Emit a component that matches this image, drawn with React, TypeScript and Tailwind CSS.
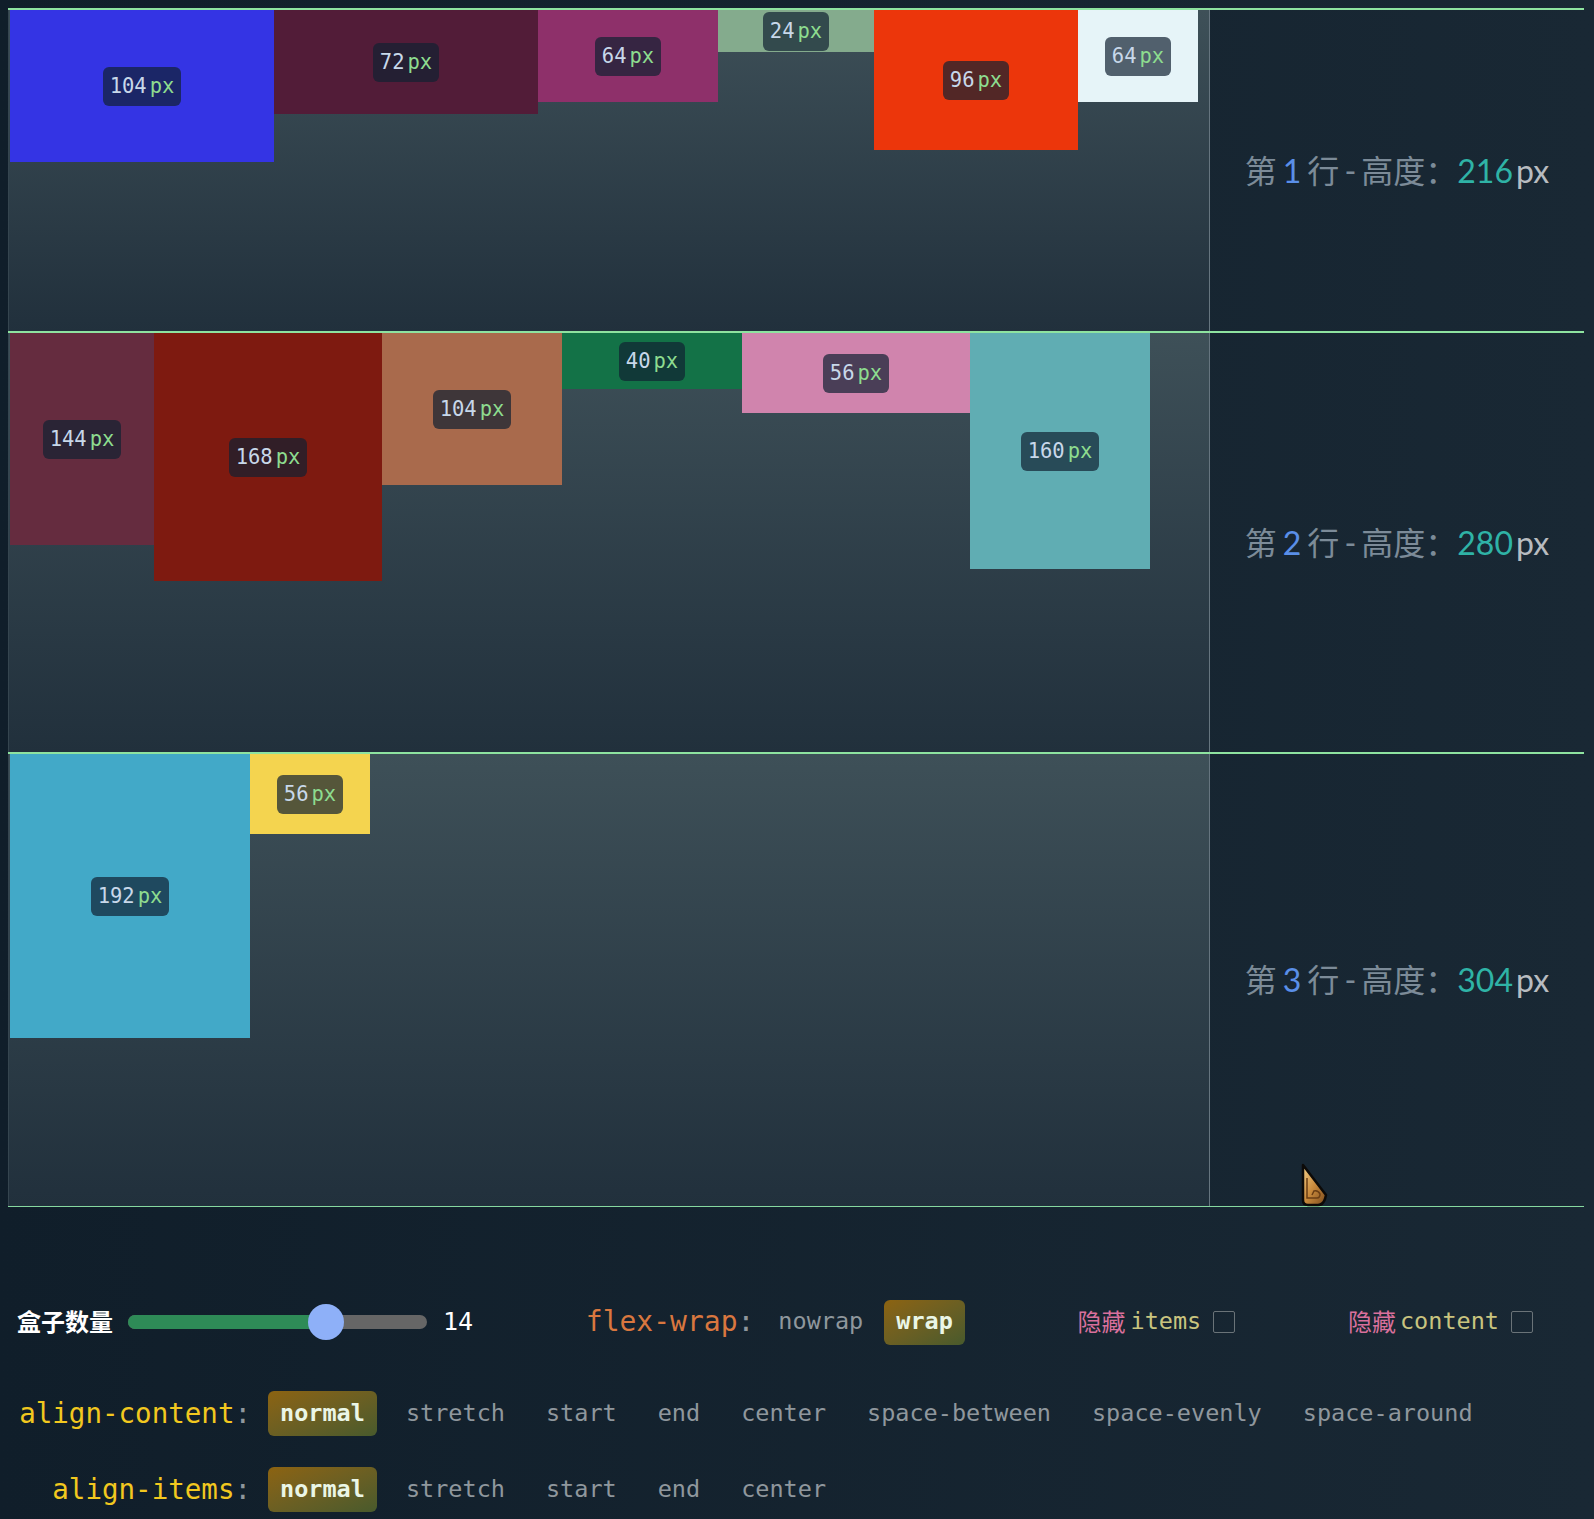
import React from "react";

type Box = { v: number; cls: string };
type Row = { n: number; h: number; cls: string; boxes: Box[] };

const rows: Row[] = [
  {
    n: 1,
    h: 216,
    cls: "h-[323px]",
    boxes: [
      { v: 104, cls: "w-[264px] h-[152px] bg-[#3434e4]" },
      { v: 72, cls: "w-[264px] h-[104px] bg-[#521c38]" },
      { v: 64, cls: "w-[180px] h-[92px] bg-[#8e306a]" },
      { v: 24, cls: "w-[156px] h-[42px] bg-[#84ab8d]" },
      { v: 96, cls: "w-[204px] h-[140px] bg-[#ec360b]" },
      { v: 64, cls: "w-[120px] h-[92px] bg-[#e6f4f8]" },
    ],
  },
  {
    n: 2,
    h: 280,
    cls: "h-[421px]",
    boxes: [
      { v: 144, cls: "w-[144px] h-[212px] bg-[#652c3f]" },
      { v: 168, cls: "w-[228px] h-[248px] bg-[#7e1a10]" },
      { v: 104, cls: "w-[180px] h-[152px] bg-[#a96a4c]" },
      { v: 40, cls: "w-[180px] h-[56px] bg-[#137247]" },
      { v: 56, cls: "w-[228px] h-[80px] bg-[#d084ad]" },
      { v: 160, cls: "w-[180px] h-[236px] bg-[#60adb3]" },
    ],
  },
  {
    n: 3,
    h: 304,
    cls: "h-[454px]",
    boxes: [
      { v: 192, cls: "w-[240px] h-[284px] bg-[#42a9c8]" },
      { v: 56, cls: "w-[120px] h-[80px] bg-[#f4d44f]" },
    ],
  },
];

const alignContent = [
  "normal",
  "stretch",
  "start",
  "end",
  "center",
  "space-between",
  "space-evenly",
  "space-around",
];
const alignItems = ["normal", "stretch", "start", "end", "center"];

const mono = "font-['DejaVu_Sans_Mono',monospace]";
const cjk = "font-['Lato','Noto_Sans_CJK_SC',sans-serif]";

const Option = ({ label, active }: { label: string; active?: boolean }) => (
  <span
    className={
      active
        ? "h-[45px] flex items-center px-[12px] rounded-md bg-linear-to-br from-[#8c6310] to-[#485a2c] text-[#eaf6e6] font-bold text-[23.5px]"
        : "h-[45px] flex items-center px-[12px] text-[#8f979d] text-[23.5px]"
    }
  >
    {label}
  </span>
);

const Checkbox = () => (
  <span className="ml-[12px] w-[22px] h-[22px] border-[1.5px] border-[#6a7378] rounded-[2px]" />
);

const Cursor = () => (
  <svg
    className="absolute left-[1299px] top-[1162px]"
    width="30"
    height="46"
    viewBox="0 0 30 46"
  >
    <defs>
      <linearGradient id="gold" x1="0" y1="0" x2="1" y2="1">
        <stop offset="0" stopColor="#f6d189" />
        <stop offset="0.5" stopColor="#c98a3c" />
        <stop offset="1" stopColor="#7a4a1c" />
      </linearGradient>
    </defs>
    <path
      d="M4 3 L4 38 Q4 43 9 43 L19 43 Q24 43 26 37 L27 33 Z"
      fill="url(#gold)"
      stroke="#0c0a08"
      strokeWidth="2.5"
      strokeLinejoin="round"
    />
    <path
      d="M8 16 L8 36 L18 36 Q21 36 21 32 Q19 28 15 29 L13 33"
      fill="none"
      stroke="#6b3e14"
      strokeWidth="1.5"
    />
  </svg>
);

export default function App() {
  return (
    <div className="relative min-h-screen bg-linear-to-r from-[#101e2a] to-[#192834] pl-[8px] pt-[8px] pb-[9px]">
      <div className="w-[1576px] border-b border-[#86d9a0]">
        {rows.map((row) => (
          <div
            key={row.n}
            className={`flex border-t-2 border-[#8ee3a0] ${row.cls}`}
          >
            <div className="w-[1202px] flex items-start pl-[1px] border-l border-[#35454f] border-r border-r-[#66757f] bg-linear-to-b from-[#3e5058] to-[#21303c]">
              {row.boxes.map((b, i) => (
                <div
                  key={i}
                  className={`flex items-center justify-center shrink-0 ${b.cls}`}
                >
                  <span
                    className={`flex items-center gap-[3px] h-[39px] px-[7px] rounded-md bg-[#112132]/70 text-[20.5px] ${mono}`}
                  >
                    <span className="text-[#c8d8ea]">{b.v}</span>
                    <span className="text-[#8ddc8f]">px</span>
                  </span>
                </div>
              ))}
            </div>
            <div
              className={`flex-1 flex items-center justify-center text-[32px] text-[#7c8b98] ${cjk}`}
            >
              <span>第</span>
              <span className="mx-[6px] text-[#5a8fe8]">{row.n}</span>
              <span>行</span>
              <span className="mx-[5px]">-</span>
              <span>高度：</span>
              <span className="text-[#2fb3a6]">{row.h}</span>
              <span className="ml-[3px] text-[#b8bcc0]">px</span>
            </div>
          </div>
        ))}
      </div>

      <div className={`pl-[9px] mt-[92px] ${mono}`}>
        <div className="w-[1516px] h-[46px] flex items-center justify-between">
          <div className="flex items-center">
            <span className={`text-white font-bold text-[24px] ${cjk}`}>
              盒子数量
            </span>
            <div className="relative ml-[15px] w-[299px] h-[14px] rounded-full bg-[#666666]">
              <div className="w-[198px] h-[14px] rounded-full bg-[#2e8b57]" />
              <span className="absolute left-[180px] top-[-11px] w-[36px] h-[36px] rounded-full bg-[#8eb0f8]" />
            </div>
            <span className="ml-[16px] text-white text-[25px]">14</span>
          </div>
          <div className="flex items-center">
            <span className="text-[28px] text-[#d9773f]">
              flex-wrap<span className="text-[#8f979d]">:</span>
            </span>
            <span className="ml-[12px] flex items-center gap-[9px]">
              <Option label="nowrap" />
              <Option label="wrap" active />
            </span>
          </div>
          <div className="flex items-center text-[23.5px]">
            <span className={`text-[#d9709c] text-[24px] ${cjk}`}>隐藏</span>
            <span className="ml-[5px] text-[#c9c47f]">items</span>
            <Checkbox />
          </div>
          <div className="flex items-center text-[23.5px]">
            <span className={`text-[#d9709c] text-[24px] ${cjk}`}>隐藏</span>
            <span className="ml-[4px] text-[#c9c47f]">content</span>
            <Checkbox />
          </div>
        </div>

        <div className="mt-[46px] flex items-center gap-[17px]">
          <span className="w-[234px] text-right text-[27.5px] text-[#f2c81f]">
            align-content<span className="text-[#8f979d]">:</span>
          </span>
          <div className="flex items-center gap-[17px]">
            {alignContent.map((o, i) => (
              <Option key={o} label={o} active={i === 0} />
            ))}
          </div>
        </div>

        <div className="mt-[31px] flex items-center gap-[17px]">
          <span className="w-[234px] text-right text-[27.5px] text-[#f2c81f]">
            align-items<span className="text-[#8f979d]">:</span>
          </span>
          <div className="flex items-center gap-[17px]">
            {alignItems.map((o, i) => (
              <Option key={o} label={o} active={i === 0} />
            ))}
          </div>
        </div>
      </div>

      <Cursor />
    </div>
  );
}
